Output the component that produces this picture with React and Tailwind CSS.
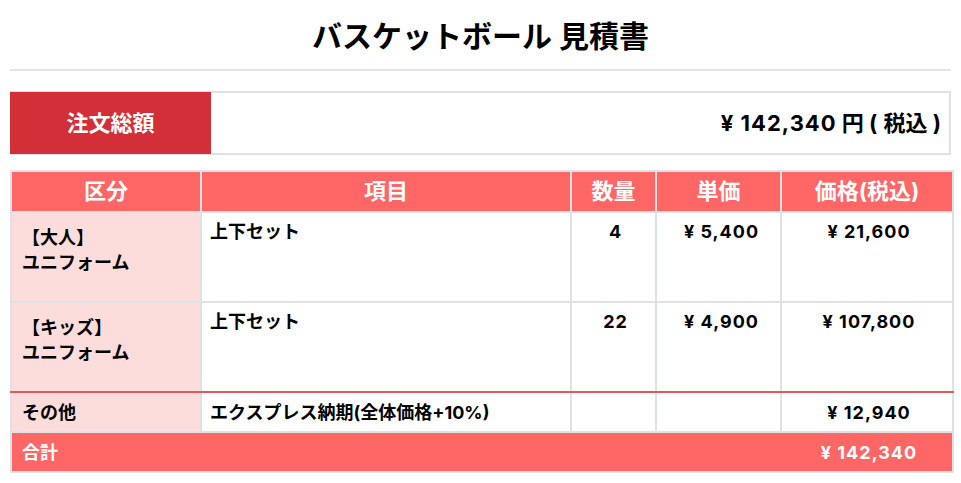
export default function App() {
  const rows = [
    { cat: ["【大人】", "ユニフォーム"], item: "上下セット", qty: "4", unit: "¥ 5,400", price: "¥ 21,600" },
    { cat: ["【キッズ】", "ユニフォーム"], item: "上下セット", qty: "22", unit: "¥ 4,900", price: "¥ 107,800" },
  ];

  const cell = "border-2 border-[#dee2e6]";
  const num = "tracking-[1px]";

  return (
    <div
      className="w-[961px] min-h-[483px] bg-white px-[10px] text-black"
      style={{ fontFamily: 'Inter, "Noto Sans CJK JP", sans-serif' }}
    >
      {/* Title */}
      <div className="pt-[14px] pb-[10px] border-b-2 border-[#e1e5ea]">
        <h1 className="text-center text-[30px] font-bold leading-[45px]">バスケットボール 見積書</h1>
      </div>

      {/* Summary */}
      <div className="mt-[20px] flex h-[64px] border-2 border-[#dee2e6]">
        <div className="-ml-[2px] -my-[1px] flex w-[201px] items-center justify-center bg-[#d32f38] text-[22px] font-bold text-white">
          注文総額
        </div>
        <div className="flex flex-1 items-center justify-end pr-[8px] text-[22px] font-bold">
          <span className={num}>¥ 142,340</span>&nbsp;円&nbsp;<span className={num}>(</span>&nbsp;税込&nbsp;<span>)</span>
        </div>
      </div>

      {/* Table */}
      <table className="mt-[15px] w-[942px] table-fixed border-collapse">
        <thead>
          <tr className="bg-[#ff6666] text-[22px] font-bold text-white">
            <th className={`${cell} h-[41px] w-[190px] p-0`}>区分</th>
            <th className={`${cell} w-[370px] p-0`}>項目</th>
            <th className={`${cell} w-[85px] p-0`}>数量</th>
            <th className={`${cell} w-[125px] p-0`}>単価</th>
            <th className={`${cell} w-[172px] p-0`}>価格(税込)</th>
          </tr>
        </thead>
        <tbody className="text-[18px] font-bold">
          {rows.map((r, i) => {
            const last = i === rows.length - 1 ? "border-b-[#e05a5a]" : "";
            return (
              <tr key={i} className="h-[90px] align-top">
                <td className={`${cell} ${last} bg-[#fddcdc] px-[10px] pt-[12px] leading-[25px]`}>
                  {r.cat[0]}
                  <br />
                  {r.cat[1]}
                </td>
                <td className={`${cell} ${last} px-[8px] pt-[6px] leading-[25px]`}>{r.item}</td>
                <td className={`${cell} ${last} ${num} pt-[6px] pl-[4px] text-center leading-[25px]`}>{r.qty}</td>
                <td className={`${cell} ${last} ${num} pt-[6px] pl-[6px] text-center leading-[25px]`}>{r.unit}</td>
                <td className={`${cell} ${last} ${num} pt-[6px] pl-[4px] text-center leading-[25px]`}>{r.price}</td>
              </tr>
            );
          })}
          <tr className="h-[40px]">
            <td className={`${cell} bg-[#fddcdc] px-[10px]`}>その他</td>
            <td className={`${cell} px-[8px]`}>エクスプレス納期(全体価格+10%)</td>
            <td className={cell}></td>
            <td className={cell}></td>
            <td className={`${cell} ${num} pl-[4px] text-center`}>¥ 12,940</td>
          </tr>
          <tr className="h-[40px] bg-[#ff6666] text-white">
            <td colSpan={4} className={`${cell} border-r-[#ff6666] px-[10px] text-[18px]`}>合計</td>
            <td className={`${cell} ${num} pl-[4px] text-center text-[18px]`}>¥ 142,340</td>
          </tr>
        </tbody>
      </table>
    </div>
  );
}
